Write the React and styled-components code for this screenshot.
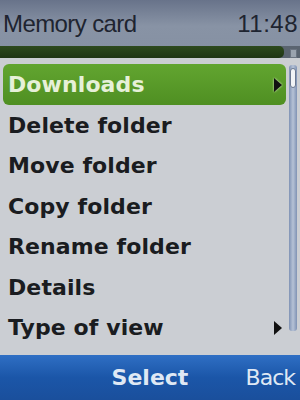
import React from "react";
import styled, { createGlobalStyle } from "styled-components";

const Global = createGlobalStyle`
  html, body {
    margin: 0;
    padding: 0;
    background: #cbced3;
  }
  * {
    box-sizing: border-box;
  }
`;

const Screen = styled.div`
  width: 300px;
  height: 400px;
  display: flex;
  flex-direction: column;
  overflow: hidden;
  font-family: "DejaVu Sans", "Open Sans", sans-serif;
  background: #cbced3;
`;

const Header = styled.div`
  background: linear-gradient(#68738a, #8893a5 45%, #8590a2);
  display: flex;
  flex-direction: column;
`;

const TitleRow = styled.div`
  height: 46px;
  display: flex;
  align-items: center;
  justify-content: space-between;
  padding: 2px 2px 0 3px;
  color: #1e2430;
  font-family: "Liberation Sans", "DejaVu Sans", sans-serif;
  font-size: 24px;
`;

const Title = styled.span`
  letter-spacing: -0.6px;
`;

const Clock = styled.span`
  letter-spacing: 0.5px;
`;

const BarRow = styled.div`
  height: 12px;
  display: flex;
  align-items: stretch;
  gap: 6px;
  background: #5a6470;
`;

const Progress = styled.div`
  flex: 1;
  background: linear-gradient(#2d4a1d, #1f3514);
  border-radius: 0 5px 5px 0;
`;

const MiniBox = styled.div`
  width: 7px;
  margin: 3px 3px 0 0;
  background: #9aa3ae;
  border: 1px solid #6a7380;
`;

const Body = styled.div`
  flex: 1;
  display: flex;
  padding: 4px 0 0 3px;
  gap: 3px;
`;

const List = styled.div`
  flex: 1;
  display: flex;
  flex-direction: column;
`;

const Row = styled.div`
  height: 40.5px;
  flex-shrink: 0;
  display: flex;
  align-items: center;
  justify-content: space-between;
  padding: 1px 4px 0 5px;
  border-radius: 6px;
  font-size: 22px;
  font-weight: bold;
  letter-spacing: 0.1px;
  color: ${(p) => (p.$active ? "#e6f0d8" : "#1a1c20")};
  background: ${(p) =>
    p.$active ? "linear-gradient(#62a530, #4f8f22)" : "transparent"};
  margin-top: ${(p) => (p.$active ? "2px" : "0")};
`;

const Arrow = styled.span`
  width: 0;
  height: 0;
  border-top: 7px solid transparent;
  border-bottom: 7px solid transparent;
  border-left: 8px solid #111;
  filter: ${(p) => (p.$active ? "drop-shadow(0 0 1px #e8f5d0)" : "none")};
`;

const Track = styled.div`
  width: 8px;
  margin: 3px 3px 24px 0;
  background: linear-gradient(90deg, #7f92b4, #b6c2d6 50%, #7f92b4);
  border-radius: 3px;
  display: flex;
  flex-direction: column;
  padding: 3px 1px;
`;

const Thumb = styled.div`
  height: 20px;
  background: #f2f4f6;
  border: 1px solid #6b7890;
  border-radius: 3px;
`;

const Softkeys = styled.div`
  height: 45px;
  background: linear-gradient(#2f6fc4, #1b56a8 50%, #1a4f9c);
  display: grid;
  grid-template-columns: 1fr auto 1fr;
  align-items: center;
  color: #dfe8f4;
  font-size: 22px;
  padding: 0 5px 0 5px;
`;

const Key = styled.span`
  grid-column: ${(p) => p.$col};
  justify-self: ${(p) => (p.$col === 3 ? "end" : "center")};
  font-weight: ${(p) => (p.$col === 3 ? "normal" : "bold")};
  letter-spacing: ${(p) => (p.$col === 3 ? "-1px" : "0")};
`;

const items = [
  { label: "Downloads", sub: true },
  { label: "Delete folder" },
  { label: "Move folder" },
  { label: "Copy folder" },
  { label: "Rename folder" },
  { label: "Details" },
  { label: "Type of view", sub: true },
];

export default function App() {
  return (
    <Screen>
      <Global />
      <Header>
        <TitleRow>
          <Title>Memory card</Title>
          <Clock>11:48</Clock>
        </TitleRow>
        <BarRow>
          <Progress />
          <MiniBox />
        </BarRow>
      </Header>
      <Body>
        <List>
          {items.map((it, i) => (
            <Row key={it.label} $active={i === 0}>
              <span>{it.label}</span>
              {it.sub && <Arrow $active={i === 0} />}
            </Row>
          ))}
        </List>
        <Track>
          <Thumb />
        </Track>
      </Body>
      <Softkeys>
        <Key $col={2}>Select</Key>
        <Key $col={3}>Back</Key>
      </Softkeys>
    </Screen>
  );
}
